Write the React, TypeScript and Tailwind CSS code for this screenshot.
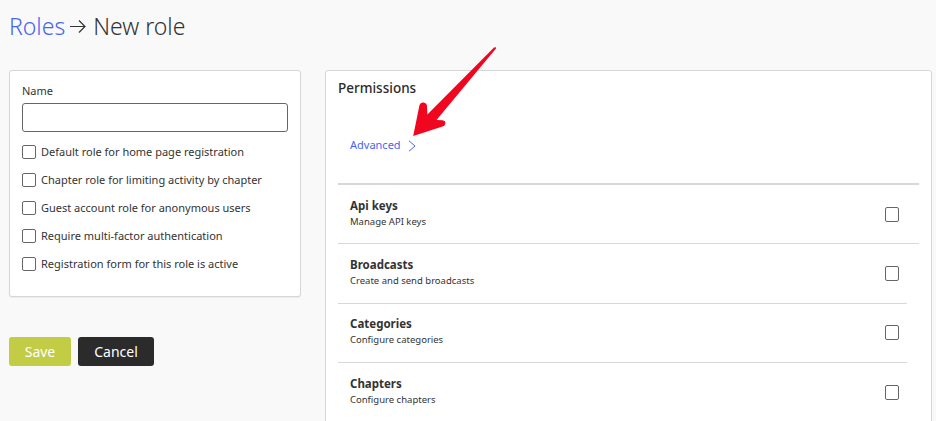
const font = { fontFamily: '"Noto Sans", "Open Sans", sans-serif' };

function Check({ label }: { label: string }) {
  return (
    <label className="flex items-center h-[28px] gap-[5px] text-[11px] text-[#333]">
      <span className="w-[14px] h-[14px] border border-[#666] rounded-[2px] bg-white shrink-0" />
      {label}
    </label>
  );
}

function Row({ title, desc, line }: { title: string; desc: string; line: string }) {
  return (
    <div className={line}>
      <div className="flex items-center justify-between h-[58.4px] pl-[12px] pr-[20px]">
        <div className="flex flex-col -mt-[1px]">
          <span className="text-[11.5px] leading-[16px] font-bold text-[#333]">{title}</span>
          <span className="text-[9.5px] leading-[16px] text-[#333]">{desc}</span>
        </div>
        <span className="w-[14px] h-[15px] border border-[#666] rounded-[2px] bg-white" />
      </div>
    </div>
  );
}

export default function App() {
  return (
    <div style={font} className="relative w-[936px] h-[421px] overflow-hidden bg-[#f9f9f9]">
      <h1 className="pl-[9px] pt-[10px] h-[70px] text-[23px] leading-[32px] font-light text-[#333] flex items-start gap-[6px]">
        <span className="text-[#4666f0] -mr-px">Roles</span>
        <svg width="18" height="32" viewBox="0 0 18 32" fill="none" stroke="#333" strokeWidth="1.2" className="-ml-px">
          <path d="M1 16.5h15M10 10.5l6 6-6 6" />
        </svg>
        <span>New role</span>
      </h1>
      <div className="flex items-start pl-[9px] gap-[24px]">
        <div className="w-[292px] shrink-0">
          <div className="h-[227px] bg-white border border-[#d6d6d6] rounded-[3px] pt-[12px] px-[12px] shadow-[0_1px_1px_rgba(0,0,0,0.06)]">
            <div className="text-[11px] leading-[16px] text-[#333] mb-[4px]">Name</div>
            <div className="h-[29px] border border-[#666] rounded-[3px] bg-white mb-[6px]" />
            <Check label="Default role for home page registration" />
            <Check label="Chapter role for limiting activity by chapter" />
            <Check label="Guest account role for anonymous users" />
            <Check label="Require multi-factor authentication" />
            <Check label="Registration form for this role is active" />
          </div>
          <div className="flex gap-[7px] mt-[40px]">
            <button className="w-[62px] h-[29px] rounded-[3px] bg-[#c2cc45] text-white text-[14px]">Save</button>
            <button className="w-[76px] h-[29px] rounded-[3px] bg-[#2b2b2b] text-white text-[14px]">Cancel</button>
          </div>
        </div>
        <div className="w-[607px] h-[400px] shrink-0 bg-white border border-[#d6d6d6] rounded-[3px] pt-[8px] pl-[12px] pr-[12px]">
          <div className="text-[13.5px] leading-[18px] font-medium text-[#2b2b2b]">Permissions</div>
          <div className="flex items-center h-[86px] pl-[12px] pt-[10px] gap-[7px] text-[11px] text-[#4666f0]">
            Advanced
            <svg width="8" height="12" viewBox="0 0 8 12" fill="none" stroke="#4666f0" strokeWidth="1" className="mt-[2px]">
              <path d="M1 .8 7 6l-6 5.2" />
            </svg>
          </div>
          <div className="h-[2px] bg-[#d8d8d8]" />
          <Row title="Api keys" desc="Manage API keys" line="border-b border-[#d8d8d8]" />
          <div className="w-[569px]">
            <Row title="Broadcasts" desc="Create and send broadcasts" line="border-b border-[#d8d8d8] [&>div]:pr-[8px]" />
            <Row title="Categories" desc="Configure categories" line="border-b border-[#d8d8d8] [&>div]:pr-[8px]" />
            <Row title="Chapters" desc="Configure chapters" line="[&>div]:pr-[8px]" />
          </div>
        </div>
      </div>
      <svg className="absolute left-[405px] top-[40px]" width="100" height="105" viewBox="405 40 100 105">
        <path d="M413.2 136 L419.5 105 Q420.5 102 423.5 102.5 Q427 103.2 427 106.5 L427.4 114.5 L494 47.5 Q496.5 46.5 496 48.5 L436.5 120 L442.5 120.2 Q445.8 120.8 445.4 123.5 Q445 125.8 442.5 126.5 Z" fill="#f0061f" />
      </svg>
    </div>
  );
}
